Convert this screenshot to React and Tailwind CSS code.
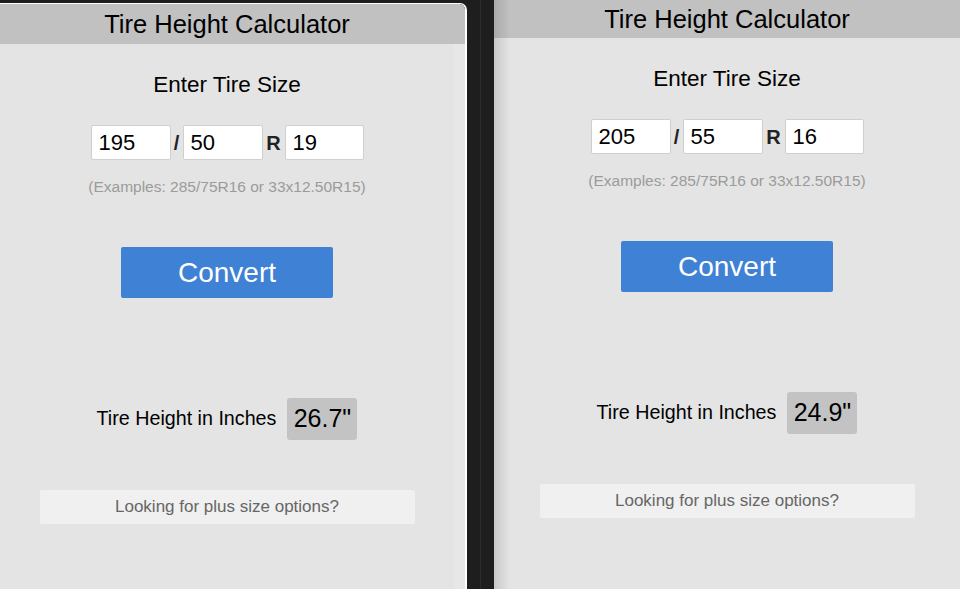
import React from "react";

function Panel({ a, b, c, value, headerH }) {
  return (
    <div className="flex flex-col h-full">
      <div
        className="flex items-center justify-center bg-[#c1c1c1] text-[25.5px] text-black shrink-0"
        style={{ height: headerH }}
      >
        Tire Height Calculator
      </div>
      <div className="flex-1 bg-[#e4e4e4] flex flex-col items-center">
        <div className="mt-[29px] text-[22.5px] leading-[24px] text-black">Enter Tire Size</div>
        <div className="mt-[28px] flex items-center h-[35px]">
          <div className="w-[80px] h-[35px] bg-white border border-[#cfcfcf] rounded-[2px] pl-[7px] flex items-center text-[22px] text-black">{a}</div>
          <div className="w-[12px] text-center text-[20px] font-bold text-[#222]">/</div>
          <div className="w-[80px] h-[35px] bg-white border border-[#cfcfcf] rounded-[2px] pl-[7px] flex items-center text-[22px] text-black">{b}</div>
          <div className="w-[22px] text-center text-[20px] font-bold text-[#222]">R</div>
          <div className="w-[79px] h-[35px] bg-white border border-[#cfcfcf] rounded-[2px] pl-[7px] flex items-center text-[22px] text-black">{c}</div>
        </div>
        <div className="mt-[18px] text-[15.5px] leading-[18px] text-[#9b9b9b]">
          (Examples: 285/75R16 or 33x12.50R15)
        </div>
        <div className="mt-[51px] w-[212px] h-[51px] bg-[#3f81d5] rounded-[2px] flex items-center justify-center text-[28px] text-white">
          Convert
        </div>
        <div className="mt-[100px] flex items-center">
          <div className="text-[19.7px] text-black mr-[11px]">Tire Height in Inches</div>
          <div className="w-[70px] h-[42px] bg-[#c3c3c3] rounded-[3px] flex items-center justify-center text-[25px] text-black">
            {value}
          </div>
        </div>
        <div className="mt-[50px] w-[375px] h-[34px] bg-[#f0f0f0] rounded-[2px] flex items-center justify-center text-[17px] text-[#666]">
          Looking for plus size options?
        </div>
      </div>
    </div>
  );
}

export default function App() {
  return (
    <div
      className="w-[960px] h-[589px] overflow-hidden bg-[#1e1e1e] flex"
      style={{ fontFamily: '"Liberation Sans", Arial, sans-serif' }}
    >
      <div className="w-[467px] mt-[3px] h-[586px] shrink-0 flex rounded-tr-[7px] overflow-hidden border-r-2 border-t border-white">
        <div className="w-[454px] shrink-0">
          <Panel a="195" b="50" c="19" value={'26.7"'} headerH={40} />
        </div>
        <div className="flex-1 flex flex-col">
          <div className="h-[40px] bg-[#c1c1c1]" />
          <div className="flex-1 bg-[#e7e7e7]" />
        </div>
      </div>
      <div className="w-[27px] shrink-0 flex justify-center">
        <div className="w-[1px] h-full bg-[#2c2c2c]" />
      </div>
      <div className="flex-1 relative">
        <Panel a="205" b="55" c="16" value={'24.9"'} headerH={38} />
        <div className="absolute inset-y-0 left-0 w-[16px] bg-gradient-to-r from-[rgba(0,0,0,0.12)] to-transparent pointer-events-none" />
      </div>
    </div>
  );
}
